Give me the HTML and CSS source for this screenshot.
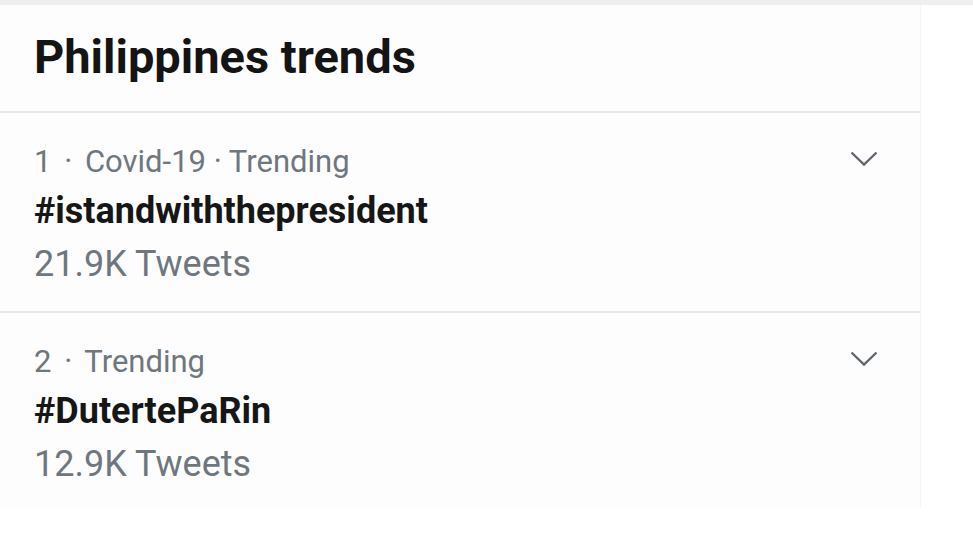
FILE: index.html
```html
<!DOCTYPE html>
<html lang="en">
<head>
  <meta charset="UTF-8">
  <meta name="viewport" content="width=device-width, initial-scale=1.0">
  <title>Philippines trends</title>
  <link rel="stylesheet" href="styles.css">
</head>
<body>
  <div class="page">
    <div class="panel">
      <h1 class="panel-title">Philippines trends</h1>

      <div class="trend">
        <div class="trend-text">
          <div class="trend-meta">1 <span class="dot">·</span> Covid-19 · Trending</div>
          <div class="trend-name">#istandwiththepresident</div>
          <div class="trend-count">21.9K Tweets</div>
        </div>
        <svg class="chevron" width="28" height="18" viewBox="0 0 28 18">
          <polyline points="1.5,2.5 14,14.5 26.5,2.5" fill="none" stroke="#5f6870" stroke-width="2.4" />
        </svg>
      </div>

      <div class="trend last">
        <div class="trend-text">
          <div class="trend-meta">2 <span class="dot">·</span> Trending</div>
          <div class="trend-name">#DutertePaRin</div>
          <div class="trend-count">12.9K Tweets</div>
        </div>
        <svg class="chevron" width="28" height="18" viewBox="0 0 28 18">
          <polyline points="1.5,2.5 14,14.5 26.5,2.5" fill="none" stroke="#5f6870" stroke-width="2.4" />
        </svg>
      </div>
    </div>
  </div>
</body>
</html>
```

FILE: styles.css
```css
body { margin: 0; background: #ffffff; font-family: Roboto, "Liberation Sans", sans-serif; }
.page { width: 973px; height: 540px; border-top: 5px solid #eeeeee; box-sizing: border-box; }
.panel { width: 920px; background: #fdfdfd; border-right: 1px solid #f6f6f6; }
.panel-title { margin: 0; padding: 24px 34px 0; height: 82px; font-size: 47px; line-height: 56px; font-weight: 700; color: #141414; border-bottom: 2px solid #e8e8e8; }
.trend { display: flex; justify-content: space-between; align-items: flex-start; padding: 24px 42px 18px 34px; border-bottom: 2px solid #e8e8e8; }
.trend.last { border-bottom: none; padding-bottom: 15px; }
.trend-text { display: flex; flex-direction: column; }
.trend-meta { font-size: 31px; line-height: 50px; color: #6f777e; }
.dot { margin: 0 5px; }
.trend-name { font-size: 36px; line-height: 48px; font-weight: 700; color: #161616; }
.trend-count { font-size: 36px; line-height: 58px; color: #6f777e; }
.chevron { margin-top: 13px; }
```
